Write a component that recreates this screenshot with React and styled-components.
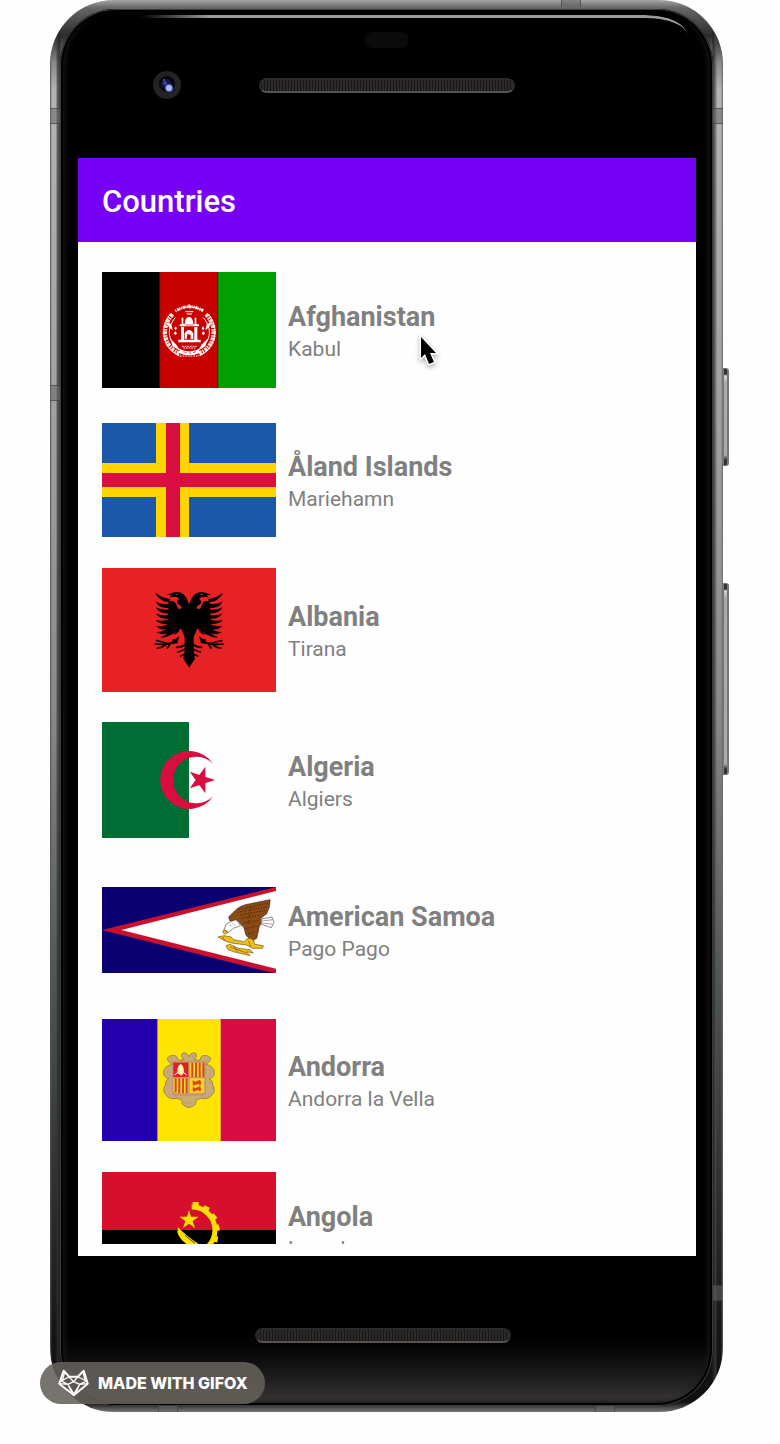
import React from "react";
import styled, { createGlobalStyle, css } from "styled-components";

const GlobalStyle = createGlobalStyle`
  *, *::before, *::after { box-sizing: border-box; }
  body {
    margin: 0;
    background: #fefefe;
    font-family: Roboto, "Liberation Sans", sans-serif;
  }
`;

const Page = styled.main`
  position: relative;
  height: 100vh;
  min-height: 640px;
  padding: 0 57px 32px 50px;
  overflow: hidden;
`;

/* Device */

const Phone = styled.div`
  position: relative;
  display: flex;
  height: 100%;
  padding: 9px 10px 6px;
  border-radius: 64px;
  background:
    linear-gradient(90deg, #555 0, #0000 2px, #0000 6px, #3339 7px, #222c 10px, #0000 11px, #0000 calc(100% - 11px), #222c calc(100% - 10px), #5558 calc(100% - 7px), #0000 calc(100% - 6px), #0000 calc(100% - 2px), #666 100%),
    linear-gradient(180deg, #a5a5a5 0, #666 8px, #2c2c2c 36px, #888 62px, #b4b4b4 90px, #a0a0a0 30%, #8a8a8a 50%, #4d5551 70%, #2c2e2d 85%, #141414 95%, #111 calc(100% - 10px), #777 100%);
`;

const Glass = styled.div`
  position: relative;
  display: flex;
  flex: 1;
  flex-direction: column;
  min-width: 0;
  padding: 0 17px 0 18px;
  border-radius: 56px;
  background: linear-gradient(180deg, #000 0, #000 calc(100% - 70px), #0c0c0c calc(100% - 48px), #1c1c1c calc(100% - 30px), #333130 calc(100% - 8px), #1a1a1a 100%);
  box-shadow:
    inset 0 0 0 1px #3a3d3b,
    inset 0 0 0 3px #000,
    inset 7px 0 6px -3px #1d1d1d,
    inset -7px 0 6px -3px #1d1d1d;
`;

const Shine = styled.div`
  position: absolute;
  top: 6px;
  left: 80px;
  right: 26px;
  height: 20px;
  border-top: 3px solid #9c9a9b;
  border-top-right-radius: 42px 20px;
  mask-image: linear-gradient(90deg, transparent, #000 70px);
`;

const Antenna = styled.span`
  position: absolute;
  background: #6668;
  border: 0 solid #3338;
  ${({ $edge, $at }) =>
    $edge === "left" || $edge === "right"
      ? css`
          ${$edge}: 0;
          top: ${$at};
          width: 10px;
          height: 16px;
          border-width: 1px 0;
        `
      : css`
          ${$edge}: 0;
          left: ${$at};
          width: 20px;
          height: 7px;
          border-width: 0 1px;
        `}
`;

const SideKey = styled.span`
  position: absolute;
  left: 100%;
  top: ${({ $top }) => $top}px;
  width: 6px;
  height: ${({ $length }) => $length}px;
  border: 1px solid #777;
  border-width: 1px 2px 1px 1px;
  border-radius: 0 3px 3px 0;
  background: linear-gradient(180deg, #333 0, #333 5px, #d5d5d5 7px, #aaa 14px, #aaa calc(100% - 10px), #333 calc(100% - 5px));
`;

const TopBezel = styled.div`
  display: flex;
  flex: none;
  flex-direction: column;
  align-items: center;
  gap: 22px;
  height: 149px;
  padding-top: 23px;
`;

const Sensor = styled.span`
  width: 44px;
  height: 16px;
  border-radius: 8px;
  background: #0b0b0b;
`;

const SpeakerRow = styled.div`
  display: grid;
  grid-template-columns: 1fr 256px 1fr;
  align-items: center;
  align-self: stretch;
`;

const Speaker = styled.span`
  grid-column: 2;
  height: 15px;
  border: 2px solid #2b2b2b;
  border-bottom-color: #55524f;
  border-radius: 8px;
  background: repeating-linear-gradient(90deg, #181616 0, #181616 1px, #2c2a29 1px, #2c2a29 3px);
`;

const Camera = styled.svg`
  grid-row: 1;
  width: 30px;
  height: 30px;
  margin-left: 74px;
`;

const BottomBezel = styled.div`
  display: flex;
  flex: none;
  justify-content: center;
  height: 150px;
  padding: 72px 8px 0 0;

  ${Speaker} {
    width: 256px;
  }
`;

/* App screen */

const Screen = styled.div`
  display: flex;
  flex: 1;
  flex-direction: column;
  min-height: 0;
  padding-bottom: 12px;
  background: #fefefe;
`;

const AppBar = styled.header`
  display: flex;
  flex: none;
  align-items: center;
  height: 84px;
  padding: 4px 24px 0;
  background: #7700f6;
`;

const Title = styled.h1`
  margin: 0;
  color: #fff;
  font-size: 31px;
  font-weight: 500;
  line-height: 36px;
`;

const CountryList = styled.ul`
  flex: 1;
  min-height: 0;
  margin: 0;
  padding: 13px 24px 0;
  overflow: hidden;
  list-style: none;
`;

const CountryRow = styled.li`
  display: flex;
  align-items: center;
  gap: 12px;
  height: 150px;
`;

const Flag = styled.svg`
  display: block;
  flex: none;
  width: 174px;
`;

const CountryText = styled.div`
  min-width: 0;
  padding-top: 4px;
  color: #808080;
`;

const CountryName = styled.h2`
  margin: 0;
  font-size: 27px;
  font-weight: 700;
  line-height: 34px;
`;

const Capital = styled.p`
  margin: 0;
  font-size: 21px;
  line-height: 30px;
`;

/* Overlays */

const Pointer = styled.svg`
  position: absolute;
  top: 333px;
  left: 416px;
  width: 24px;
  height: 36px;
  filter: drop-shadow(0 2px 2px #0005);
`;

const GifoxBadge = styled.div`
  position: absolute;
  bottom: 40px;
  left: 40px;
  display: flex;
  align-items: center;
  gap: 9px;
  height: 42px;
  padding: 0 17px 0 18px;
  border-radius: 21px;
  background: rgba(100, 96, 90, 0.88);
  color: #fff;
  font-family: Inter, "Open Sans", sans-serif;
  font-size: 16px;
  font-weight: 800;
  line-height: 20px;
  white-space: nowrap;
`;

const FoxLogo = styled.svg`
  width: 31px;
  height: 28px;
`;

/* Flags */

const range = (n) => Array.from({ length: n }, (_, i) => i);

function Afghanistan() {
  return (
    <Flag viewBox="36 33 522 348" aria-hidden="true">
      <path fill="#000" d="M36 33h174v348H36z" />
      <path fill="#c80000" d="M210 33h174v348H210z" />
      <path fill="#00a000" d="M384 33h174v348H384z" />
      <path stroke="#3a1a00" strokeWidth="3" d="M209 33v348M383 33v348" />
      <g fill="none" stroke="#fff">
        <path strokeWidth="13" strokeDasharray="9 3 5 2" stroke="#f3dcd2" d="M248 160C208 200 222 262 272 279M348 160C388 200 374 262 324 279" />
        <path strokeWidth="3" d="M240 160C208 200 218 262 268 285M356 160C388 200 378 262 328 285M256 170C226 205 234 246 274 268M340 170C370 205 362 246 322 268" />
        <path strokeWidth="9" strokeDasharray="3 3 6 2 2 3" d="M256 150Q297 124 341 150" />
        <path strokeWidth="3" d="M262 148Q297 126 336 148M286 152h24M290 159h16M297 129v12" />
        <path strokeWidth="11" d="M268 270Q297 284 328 270" />
        <path strokeWidth="3" strokeDasharray="5 3" d="M276 256h44M280 261h36M270 285h56" />
      </g>
      <g fill="#fff">
        <path d="M284 190q0-20 13-23 13 3 13 23zM275 170h5v22h-5zM314 170h5v22h-5zM269 190h58v6h-58zM273 198h9v38h-9zM313 198h9v38h-9zM265 236h67v8h-67z" />
        <path d="M284 234v-17q13-22 26 0v17h-8v-12l-10-4-2 16z" />
        <path d="m257 196 4 6-4 6-4-6zM339 196l4 6-4 6-4-6zM256 211l5 6-5 6-5-6zM340 211l5 6-5 6-5-6zM228 182l16 8 4 18-10-8zM366 182l-16 8-4 18 10-8zM240 232l20 20 8 16-20-12zM354 232l-20 20-8 16 20-12z" />
      </g>
      <path fill="none" stroke="#c80000" strokeWidth="2" d="M280 272l10 3M296 276h7M309 275l9-3M286 192h24" />
    </Flag>
  );
}

function Aland() {
  return (
    <Flag viewBox="0 0 174 114" aria-hidden="true">
      <path fill="#1c58aa" d="M0 0h174v114H0z" />
      <path fill="#ffd400" d="M54 0h33v114H54zM0 40h174v34H0z" />
      <path fill="#da0e40" d="M64 0h14v114H64zM0 50h174v14H0z" />
    </Flag>
  );
}

function EagleHalf() {
  return (
    <>
      <path d="M298 136C292 116 284 98 264 96 252 95 244 101 230 104L246 106 238 112 256 110C264 112 270 116 264 121 258 126 262 132 270 136 278 142 275 148 268 147 260 145 261 132 254 126 248 122 242 123 236 124L232 198 260 206 274 207 284 232 284 270 280 296 298 323Z" />
      <path d="M238 126C220 126 204 116 196 99 204 102 214 114 240 117ZM240 143C220 146 202 140 198 124 208 132 222 134 240 130ZM240 160C220 162 204 156 198 142 210 149 224 150 240 148ZM240 176C222 178 204 173 198 160 210 167 224 167 240 164ZM242 191C224 195 204 190 197 180 210 183 224 183 240 178ZM246 203C226 212 208 210 199 198 212 200 226 198 242 190ZM250 207C236 222 216 228 200 216 214 216 230 210 242 198ZM256 207C246 224 228 236 210 232 224 228 238 218 246 202ZM263 208C256 218 246 226 236 226 246 220 250 212 254 204ZM270 208C266 218 258 224 250 224 256 218 260 212 262 206Z" />
      <path d="M268 228 262 250 246 252 248 238 256 238Z" />
      <g fill="none" stroke="#000" strokeLinecap="round" strokeWidth="5">
        <path d="M252 246 226 254 196 252M238 252 218 246 200 242M228 254 214 262 202 264M240 252l-8 12" />
        <path d="M288 252Q276 262 260 262M289 264Q278 274 264 276M290 276Q282 286 272 288M292 284l-8 10" />
      </g>
    </>
  );
}

function Albania() {
  return (
    <Flag viewBox="36 24 522 372" aria-hidden="true">
      <path fill="#e82224" d="M36 24h522v372H36z" />
      <EagleHalf />
      <g transform="matrix(-1 0 0 1 595 0)">
        <EagleHalf />
      </g>
      <path fill="none" stroke="#e82224" strokeWidth="3" d="M256 103h7M332 103h7" />
    </Flag>
  );
}

function Algeria() {
  return (
    <Flag viewBox="36 37 522 348" aria-hidden="true">
      <path fill="#fefefe" d="M36 37h522v348H36z" />
      <path fill="#006d35" d="M36 37h261v348H36z" />
      <path fill="#d80d40" d="M370 163A87 87 0 1 0 370 259 70 70 0 1 1 370 163ZM375 211 299 236 346 171V251L299 186Z" />
    </Flag>
  );
}

function AmericanSamoa() {
  return (
    <Flag viewBox="36 24 522 260" aria-hidden="true">
      <path fill="#0a0072" d="M36 24h522v260H36z" />
      <path fill="#c9102c" d="M36 153 558 24V284Z" />
      <path fill="#fefefe" d="M94 153 558 36V269Z" />
      <path fill="#8a4b16" stroke="#3d1c08" strokeWidth="2" d="M434 96Q450 78 482 74L540 62Q542 82 530 104L512 118 518 126 508 142 500 178 484 186 468 168 462 146 442 124 420 126 416 114Z" />
      <path fill="none" stroke="#3d1c08" strokeDasharray="3 5" strokeWidth="3" d="M446 92 534 72M442 100 530 84M452 108 526 94M456 118 512 108M462 132 508 124M468 148 502 142M474 164 498 158M482 84 474 140" />
      <path fill="#fff" stroke="#555" strokeWidth="2" d="M438 122 452 140 430 148 416 160 402 152 408 136 422 128ZM514 120 546 114 552 130 544 146 514 136Z" />
      <path fill="none" stroke="#777" strokeWidth="2" d="M516 126 548 122M516 132 548 136M420 140h4M428 132l8 8" />
      <g fill="#f0be1b" stroke="#70540c" strokeWidth="2">
        <path d="M402 152 398 160 404 166 414 160ZM384 174 402 170 424 174 430 182 462 188 470 180 482 178 492 186 494 196 520 200 518 208 488 208 470 198 424 192 406 186Z" />
        <path d="M408 200 420 196 444 208 480 212 490 222 470 218 480 230 456 224 430 218 414 212Z" />
      </g>
      <path fill="none" stroke="#70540c" strokeWidth="2" d="M420 204 470 222M432 200 442 218M476 186 482 204M398 174 404 184" />
    </Flag>
  );
}

function Andorra() {
  return (
    <Flag viewBox="36 30 522 366" aria-hidden="true">
      <path fill="#2200ad" d="M36 30h167v366H36z" />
      <path fill="#fee400" d="M203 30h189v366H203z" />
      <path fill="#d80c40" d="M392 30h166v366H392z" />
      <path fill="#c8ad70" stroke="#9c8a4c" strokeWidth="3" d="M297 142Q286 126 276 134 270 142 282 152L264 154Q262 136 244 140 226 144 236 158L246 166Q222 172 221 190 220 206 236 208 224 216 226 228 214 246 230 260 240 272 262 268 280 272 276 284 282 292 297 296 312 292 318 284 314 272 332 268 354 272 364 260 380 246 368 228 370 216 358 208 374 206 373 190 372 172 348 166L358 158Q368 144 350 140 332 136 330 154L312 152Q324 142 318 134 308 126 297 142Z" />
      <g fill="none" stroke="#dd8f8e" strokeWidth="4" strokeDasharray="6 4">
        <path d="M236 180Q226 192 240 200M236 218Q222 240 240 256 254 266 270 260M358 180Q368 192 354 200M358 218Q372 240 354 256 340 266 324 260M282 284h30M284 140l8 8M310 140l-8 8M244 148l6 6M350 148l-6 6" />
      </g>
      <path fill="#c8907c" d="M246 156h102v92q0 12-14 12h-74q-14 0-14-12z" />
      <path fill="#d9231d" d="M250 161h45v43h-45z" />
      <path fill="#f7d51f" d="M299 161h44v43h-44zM250 208h45v45h-36q-9 0-9-9zM299 208h44v36q0 9-9 9h-35z" />
      <path fill="none" stroke="#cf4a28" strokeWidth="6" d="M307 161v43M318 161v43M329 161v43M340 161v43M257 208v42M268 208v45M279 208v45M290 208v45" />
      <path fill="#f8e77a" d="M272 164q12 8 10 28l-8 8-12-8q-2-20 10-28z" />
      <path fill="none" stroke="#fff" strokeWidth="3" d="M253 198l14-10M290 198l-10-8M272 170v24M266 180h12" />
      <path fill="#d84a1c" d="M308 214l8 4 14-6 4 10-4 9-4-6-10 2-4 5-4-6zM308 234l8 3 14-5 4 8-4 9-4-6-10 2-4 5-4-6z" />
    </Flag>
  );
}

function Angola() {
  return (
    <Flag viewBox="36 41 522 348" aria-hidden="true">
      <path fill="#d60f2c" d="M36 41h522v174H36z" />
      <path fill="#000" d="M36 215h522v174H36z" />
      <path fill="none" stroke="#ffdf00" strokeWidth="15" d="M305 146A69 69 0 0 1 340 275 69 69 0 0 1 270 275" />
      <g fill="#ffdf00">
        {range(7).map((i) => (
          <path key={i} d="M308 131h18v14h-18z" transform={`rotate(${i * 25} 303 215)`} />
        ))}
        <path d="M297 155 303 175H326L308 188 315 209 297 196 279 209 286 188 268 175H291Z" />
        <path d="M264 206Q290 236 350 272L336 284Q270 254 262 222Z" />
      </g>
      <path stroke="#000" strokeWidth="2" d="M285 231l30 24" />
    </Flag>
  );
}

const countries = [
  { name: "Afghanistan", capital: "Kabul", FlagArt: Afghanistan },
  { name: "Åland Islands", capital: "Mariehamn", FlagArt: Aland },
  { name: "Albania", capital: "Tirana", FlagArt: Albania },
  { name: "Algeria", capital: "Algiers", FlagArt: Algeria },
  { name: "American Samoa", capital: "Pago Pago", FlagArt: AmericanSamoa },
  { name: "Andorra", capital: "Andorra la Vella", FlagArt: Andorra },
  { name: "Angola", capital: "Luanda", FlagArt: Angola },
];

export default function App() {
  return (
    <Page>
      <GlobalStyle />
      <Phone>
        <Antenna $edge="left" $at="108px" />
        <Antenna $edge="left" $at="385px" />
        <Antenna $edge="right" $at="108px" />
        <Antenna $edge="right" $at="91%" />
        <Antenna $edge="top" $at="76%" />
        <Antenna $edge="bottom" $at="16%" />
        <Antenna $edge="bottom" $at="81%" />
        <SideKey $top={368} $length={98} />
        <SideKey $top={583} $length={192} />
        <Glass>
          <Shine />
          <TopBezel>
            <Sensor />
            <SpeakerRow>
              <Camera viewBox="0 0 30 30" aria-hidden="true">
                <circle cx="15" cy="15" r="14" fill="#242222" />
                <circle cx="15" cy="14" r="8" fill="#07070d" />
                <circle cx="14" cy="14" r="5" fill="#15154a" />
                <circle cx="13" cy="13" r="2" fill="#3c3fa8" />
                <circle cx="17" cy="18" r="4" fill="#4a55b8" />
                <circle cx="17" cy="18" r="3" fill="#a9bdf5" />
                <circle cx="12" cy="10" r="1" fill="#667" />
              </Camera>
              <Speaker />
            </SpeakerRow>
          </TopBezel>
          <Screen>
            <AppBar>
              <Title>Countries</Title>
            </AppBar>
            <CountryList>
              {countries.map(({ name, capital, FlagArt }) => (
                <CountryRow key={name}>
                  <FlagArt />
                  <CountryText>
                    <CountryName>{name}</CountryName>
                    <Capital>{capital}</Capital>
                  </CountryText>
                </CountryRow>
              ))}
            </CountryList>
          </Screen>
          <BottomBezel>
            <Speaker />
          </BottomBezel>
        </Glass>
      </Phone>
      <Pointer viewBox="0 0 24 36" aria-hidden="true">
        <path
          d="M5 4V25L9 21 13 31 18 29 14 20H20Z"
          fill="#000"
          stroke="#fff"
          strokeWidth="3"
          paintOrder="stroke"
        />
      </Pointer>
      <GifoxBadge>
        <FoxLogo viewBox="52 386 94 84" aria-hidden="true">
          <path
            fill="none"
            stroke="#fff"
            strokeWidth="6"
            strokeLinejoin="round"
            d="M69 391 86 409H112L130 391 142 430 100 465 56 430Z"
          />
          <path
            fill="none"
            stroke="#fff"
            strokeWidth="4"
            strokeLinejoin="round"
            d="M86 409 62 422 82 432 100 461 118 432 138 422 112 409M72 394 66 420M128 394 134 420M86 410 99 424 112 410M58 430 82 432M142 430 118 432M82 432 99 424 118 432M82 432 94 458M118 432 106 458"
          />
        </FoxLogo>
        MADE WITH GIFOX
      </GifoxBadge>
    </Page>
  );
}
